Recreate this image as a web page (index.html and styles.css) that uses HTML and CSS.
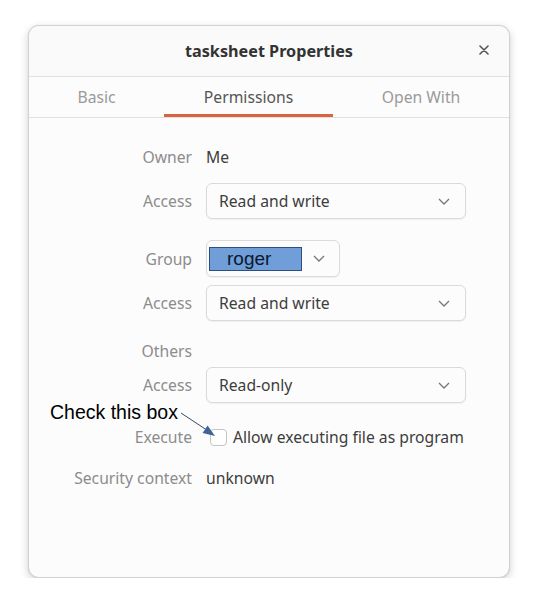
FILE: index.html
```html
<!DOCTYPE html>
<html>
<head>
<meta charset="utf-8">
<link rel="stylesheet" href="styles.css">
</head>
<body>
<div class="window">
  <div class="header">
    <div class="title">tasksheet Properties</div>
    <div class="close">
      <svg width="10" height="10" viewBox="0 0 10 10"><path d="M1 1L9 9M9 1L1 9" stroke="#555" stroke-width="1.6" stroke-linecap="round"/></svg>
    </div>
  </div>
  <div class="tabs">
    <div class="tab">Basic</div>
    <div class="tab active">Permissions</div>
    <div class="tab">Open With</div>
  </div>
  <div class="content">
    <div class="row r-owner"><div class="label">Owner</div><div class="value">Me</div></div>
    <div class="row r-acc1"><div class="label">Access</div>
      <div class="dropdown wide"><span>Read and write</span><svg class="chev" width="12" height="7" viewBox="0 0 12 7"><path d="M1 1L6 6L11 1" fill="none" stroke="#777" stroke-width="1.3"/></svg></div></div>
    <div class="row r-group"><div class="label">Group</div>
      <div class="dropdown narrow"><span class="sel">roger</span><svg class="chev" width="12" height="7" viewBox="0 0 12 7"><path d="M1 1L6 6L11 1" fill="none" stroke="#777" stroke-width="1.3"/></svg></div></div>
    <div class="row r-acc2"><div class="label">Access</div>
      <div class="dropdown wide"><span>Read and write</span><svg class="chev" width="12" height="7" viewBox="0 0 12 7"><path d="M1 1L6 6L11 1" fill="none" stroke="#777" stroke-width="1.3"/></svg></div></div>
    <div class="row r-others"><div class="label">Others</div><div class="value"></div></div>
    <div class="row r-acc3"><div class="label">Access</div>
      <div class="dropdown wide"><span>Read-only</span><svg class="chev" width="12" height="7" viewBox="0 0 12 7"><path d="M1 1L6 6L11 1" fill="none" stroke="#777" stroke-width="1.3"/></svg></div></div>
    <div class="row r-exec"><div class="label">Execute</div>
      <div class="check"><span class="box"></span><span class="checklabel">Allow executing file as program</span></div></div>
    <div class="row r-sec"><div class="label">Security context</div><div class="value">unknown</div></div>
  </div>
  <div class="note">Check this box</div>
  <svg class="arrow" width="50" height="34" viewBox="0 0 50 34">
    <line x1="2" y1="2" x2="27" y2="18.5" stroke="#3a4a60" stroke-width="1"/>
    <path d="M36 25L23.6 21.9L28.6 14.6Z" fill="#3e6596"/>
  </svg>
</div>
</body>
</html>
```

FILE: styles.css
```css
html, body {
  margin: 0;
  padding: 0;
  background: #ffffff;
}
body {
  font-family: "Noto Sans", "DejaVu Sans", sans-serif;
  font-size: 15.7px;
}
.window {
  position: relative;
  margin: 25px 0 0 28px;
  width: 482px;
  height: 553px;
  box-sizing: border-box;
  background: #fcfcfc;
  border: 1px solid #d2d2d2;
  border-radius: 11px;
  box-shadow: 0 3px 8px rgba(0,0,0,0.18), 0 0 1px rgba(0,0,0,0.15);
  overflow: hidden;
}
.header {
  height: 50px;
  border-bottom: 1px solid #e0e0e0;
  display: flex;
  align-items: center;
  justify-content: center;
  position: relative;
  background: #fafafa;
}
.title {
  font-weight: bold;
  color: #333;
  font-size: 16.2px;
}
.close {
  position: absolute;
  right: 20px;
  top: 19px;
  width: 10px;
  height: 10px;
  display: flex;
}
.tabs {
  display: grid;
  grid-template-columns: 135px 169px 1fr;
  height: 40px;
  border-bottom: 1px solid #e0e0e0;
}
.tab {
  display: flex;
  align-items: center;
  justify-content: center;
  color: #9a9a9a;
  box-sizing: border-box;
  padding-bottom: 1px;
}
.tab.active {
  color: #555;
  border-bottom: 3px solid #d8653d;
  padding-top: 2px;
  padding-bottom: 0;
}
.content {
  display: flex;
  flex-direction: column;
  padding-top: 21px;
}
.row {
  display: grid;
  grid-template-columns: 163px 1fr;
  column-gap: 14px;
  align-items: center;
}
.label {
  text-align: right;
  color: #8c8c8c;
}
.value {
  color: #3d3d3d;
}
.r-owner { height: 36px; }
.r-acc1 { margin-top: 8px; }
.r-group { margin-top: 21px; }
.r-acc2 { margin-top: 8px; }
.r-others { margin-top: 18px; height: 24px; }
.r-acc3 { margin-top: 4px; }
.r-exec { margin-top: 22px; height: 24px; }
.r-sec { margin-top: 17px; height: 24px; }
.dropdown {
  box-sizing: border-box;
  height: 36px;
  border: 1px solid #dadada;
  border-radius: 6px;
  background: #fcfcfc;
  box-shadow: 0 1px 1px rgba(0,0,0,0.05);
  display: flex;
  align-items: center;
  justify-content: space-between;
  padding: 0 15px 0 12px;
  color: #3d3d3d;
}
.dropdown.wide { width: 260px; }
.dropdown.narrow {
  width: 134px;
  height: 37px;
  padding-left: 2px;
  padding-right: 14px;
}
.sel {
  box-sizing: border-box;
  width: 93px;
  height: 24px;
  background: #6f9ed8;
  border: 1px solid #2e4f7e;
  font-family: "Liberation Sans", Arial, sans-serif;
  font-size: 19px;
  color: #0b1830;
  display: flex;
  align-items: center;
  padding-left: 17px;
  line-height: 1;
}
.chev { display: block; }
.check {
  display: flex;
  align-items: center;
  padding-left: 4px;
  gap: 6px;
}
.box {
  box-sizing: border-box;
  width: 17px;
  height: 17px;
  border: 1px solid #c4c4c4;
  border-radius: 4px;
  background: #fff;
}
.checklabel { color: #3d3d3d; }
.note {
  position: absolute;
  left: 21px;
  top: 375px;
  font-family: "Liberation Sans", Arial, sans-serif;
  font-size: 19.5px;
  color: #000;
}
.arrow {
  position: absolute;
  left: 150px;
  top: 385px;
}
```
